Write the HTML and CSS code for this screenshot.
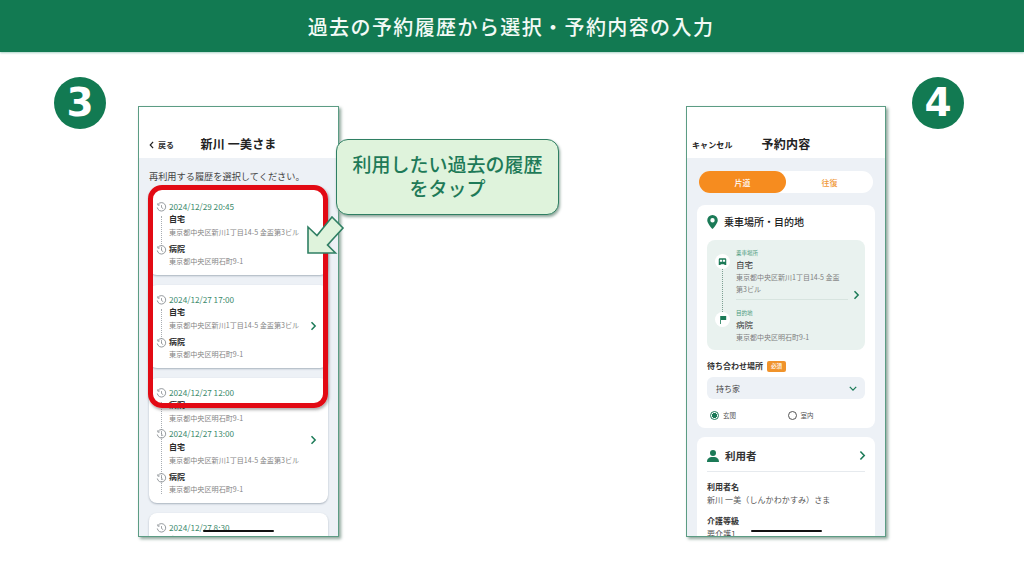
FILE: index.html
```html
<!DOCTYPE html>
<html lang="ja">
<head>
<meta charset="utf-8">
<title>過去の予約履歴から選択・予約内容の入力</title>
<link rel="stylesheet" href="styles.css">
</head>
<body>
<header class="topbar"><h1>過去の予約履歴から選択・予約内容の入力</h1></header>
<main class="canvas">
  <svg width="0" height="0" class="defs">
    <symbol id="hist" viewBox="0 0 12 12"><path d="M2.2 2.6A4.6 4.6 0 1 1 1.4 6" fill="none" stroke="#8a8f94" stroke-width="1"/><path d="M1.6 1.6l.5 2 2-.4" fill="none" stroke="#8a8f94" stroke-width=".9"/><path d="M6 3.4V6l1.9 1.3" fill="none" stroke="#8a8f94" stroke-width=".9"/></symbol>
    <symbol id="chev" viewBox="0 0 8 12"><path d="M1.6 1.4L6 6l-4.4 4.6" fill="none" stroke="#1b7a57" stroke-width="1.8"/></symbol>
  </svg>

  <div class="step step-3">3</div>
  <div class="step step-4">4</div>

  <section class="phone phone-3">
    <div class="nav nav-3">
      <span class="nav-side"><svg class="back" viewBox="0 0 6 10" width="5" height="8"><path d="M5 1L1.4 5 5 9" fill="none" stroke="#222" stroke-width="1.5"/></svg>戻る</span>
      <h2 class="nav-title">新川 一美さま</h2>
      <span></span>
    </div>
    <div class="body body-3">
      <p class="lead">再利用する履歴を選択してください。</p>
      <article class="card card-first">
        <div class="trail"></div>
        <div class="row date"><svg class="hist"><use href="#hist"/></svg>2024/12/29 20:45</div>
        <div class="row place">自宅</div>
        <div class="row addr">東京都中央区新川1丁目14-5 金盃第3ビル</div>
        <div class="row place stop"><svg class="hist"><use href="#hist"/></svg>病院</div>
        <div class="row addr">東京都中央区明石町9-1</div>
      </article>
      <article class="card">
        <div class="trail"></div>
        <svg class="chev"><use href="#chev"/></svg>
        <div class="row date"><svg class="hist"><use href="#hist"/></svg>2024/12/27 17:00</div>
        <div class="row place">自宅</div>
        <div class="row addr">東京都中央区新川1丁目14-5 金盃第3ビル</div>
        <div class="row place stop"><svg class="hist"><use href="#hist"/></svg>病院</div>
        <div class="row addr">東京都中央区明石町9-1</div>
      </article>
      <article class="card">
        <div class="trail trail-long"></div>
        <svg class="chev chev-low"><use href="#chev"/></svg>
        <div class="row date"><svg class="hist"><use href="#hist"/></svg>2024/12/27 12:00</div>
        <div class="row place">病院</div>
        <div class="row addr">東京都中央区明石町9-1</div>
        <div class="row date stop-date"><svg class="hist"><use href="#hist"/></svg>2024/12/27 13:00</div>
        <div class="row place place-gap">自宅</div>
        <div class="row addr">東京都中央区新川1丁目14-5 金盃第3ビル</div>
        <div class="row place stop"><svg class="hist"><use href="#hist"/></svg>病院</div>
        <div class="row addr">東京都中央区明石町9-1</div>
      </article>
      <article class="card">
        <div class="row date"><svg class="hist"><use href="#hist"/></svg>2024/12/27 8:30</div>
        <div class="row place">自宅</div>
      </article>
    </div>
    <div class="home"></div>
  </section>

  <div class="redframe"></div>
  <svg class="arrow" viewBox="0 0 40 40" width="40" height="40"><path d="M2 11V37H29.500L21.500 29 37 12 26 1 11 19.500Z" fill="#dff3dc" stroke="#2f7f63" stroke-width="1.6" stroke-linejoin="miter"/></svg>
  <div class="callout">利用したい過去の履歴<br>をタップ</div>

  <section class="phone phone-4">
    <div class="nav nav-4">
      <span class="nav-side cancel">キャンセル</span>
      <h2 class="nav-title">予約内容</h2>
      <span></span>
    </div>
    <div class="body body-4">
      <div class="toggle"><span class="seg seg-on">片道</span><span class="seg">往復</span></div>
      <div class="panel panel-route">
        <h3 class="sec-title"><svg viewBox="0 0 12 16" width="11" height="14"><path fill-rule="evenodd" fill="#1b7a57" d="M6 0a6 6 0 0 1 6 6c0 4-6 10-6 10S0 10 0 6a6 6 0 0 1 6-6Zm0 3.500a2.500 2.500 0 1 0 0 5 2.500 2.500 0 0 0 0-5Z"/></svg>乗車場所・目的地</h3>
        <div class="route">
          <div class="route-line"></div>
          <div class="route-dot dot-from"><svg viewBox="0 0 12 10" width="9" height="8"><path fill="#1b7a57" fill-rule="evenodd" d="M2.500 0h7A1.500 1.500 0 0 1 11 1.500V9H8.500V8h-5v1H1V1.500A1.500 1.500 0 0 1 2.500 0ZM2.500 2v2.500h3V2Zm4 0v2.500h3V2Z"/></svg></div>
          <div class="route-dot dot-to"><svg viewBox="0 0 10 10" width="8" height="8"><path fill="#1b7a57" d="M1.500 0H9v5H2.500v5h-1Z"/></svg></div>
          <svg class="chev chev-route"><use href="#chev"/></svg>
          <div class="route-block block-from">
            <div class="micro">乗車場所</div>
            <div class="route-name">自宅</div>
            <div class="route-addr">東京都中央区新川1丁目14-5 金盃<br>第3ビル</div>
          </div>
          <div class="route-block">
            <div class="micro">目的地</div>
            <div class="route-name">病院</div>
            <div class="route-addr">東京都中央区明石町9-1</div>
          </div>
        </div>
        <div class="wait"><span>待ち合わせ場所</span><em class="req">必須</em></div>
        <div class="select"><span>持ち家</span><svg viewBox="0 0 10 6" width="8" height="5"><path d="M1 1l4 4 4-4" fill="none" stroke="#1b7a57" stroke-width="1.6"/></svg></div>
        <div class="radios">
          <span class="radio radio-on"><i></i>玄関</span>
          <span class="radio"><i></i>室内</span>
        </div>
      </div>
      <div class="panel panel-user">
        <h3 class="sec-title user-title"><svg viewBox="0 0 12 12" width="12" height="12"><path fill="#1b7a57" d="M6 0a3 3 0 1 1 0 6 3 3 0 0 1 0-6ZM0 12c0-3 1.500-5 6-5s6 2 6 5Z"/></svg><span>利用者</span><svg class="chev chev-user"><use href="#chev"/></svg></h3>
        <div class="field-label">利用者名</div>
        <div class="field-value">新川 一美（しんかわかすみ）さま</div>
        <div class="field-label second">介護等級</div>
        <div class="field-value">要介護1</div>
      </div>
    </div>
    <div class="home"></div>
  </section>
</main>
</body>
</html>
```
FILE: styles.css
```css
* { box-sizing: border-box; margin: 0; padding: 0; }
html, body { width: 1024px; height: 576px; overflow: hidden; background: #fff; }
body { font-family: "Noto Sans CJK JP", "Noto Sans", sans-serif; color: #222; }

.topbar { height: 52px; background: #127a52; display: flex; align-items: center; justify-content: center; box-shadow: 0 1px 2px #a9d2c6; padding-right: 2px; }
.topbar h1 { font-size: 20px; font-weight: 500; letter-spacing: 1.4px; color: #f3faf6; }

.canvas { position: relative; width: 1024px; height: 524px; }
.defs { position: absolute; }

.step { position: absolute; top: 25px; width: 52px; height: 52px; border-radius: 50%; background: #127a52; color: #fff; font: 700 39px/52px "DejaVu Sans", sans-serif; text-align: center; }
.step-3 { left: 54px; }
.step-4 { left: 912px; }

.phone { position: absolute; top: 54px; height: 431px; background: #edf1f6; border: 1px solid #5c9c84; box-shadow: 2px 2px 3px #8fa79c; overflow: hidden; }
.phone-3 { left: 138px; width: 201px; }
.phone-4 { left: 686px; width: 200px; }

.nav { height: 51px; background: #fff; display: grid; grid-template-columns: 1fr auto 1fr; align-items: end; padding: 0 0 5px; }
.nav-side { font-size: 8px; font-weight: 700; line-height: 12px; padding-bottom: 2px; }
.nav-3 .nav-side { padding-left: 10px; display: flex; align-items: center; gap: 4px; color: #333; }
.nav-title { font-size: 12px; font-weight: 700; line-height: 18px; letter-spacing: .2px; }
.cancel { padding-left: 5px; font-size: 8px; letter-spacing: .1px; }

.body-3 { padding: 0 10px; }
.lead { font-size: 9.200px; line-height: 14px; color: #444; margin-top: 11px; margin-bottom: 5px; white-space: nowrap; }
.card { position: relative; background: #fff; border-radius: 8px; padding: 8px 0 8px 20px; margin-bottom: 10px; box-shadow: 0 1px 2px #a9b2bd; }
.card-first { padding-top: 12px; }
.row { position: relative; height: 12px; line-height: 12px; white-space: nowrap; }
.date { font-size: 8.200px; color: #3c8a6c; }
.place { font-size: 8px; font-weight: 700; margin-top: 1px; color: #2a2a2a; }
.addr { font-size: 7.100px; color: #858585; margin-top: 1px; }
.stop { margin-top: 5px; }
.stop + .addr { margin-top: 0; }
.stop-date { margin-top: 3px; }
.place-gap { margin-top: 2px; }
.hist { position: absolute; left: -13px; top: 2px; width: 11px; height: 11px; }
.trail { position: absolute; left: 12px; top: 24px; height: 34px; border-left: 1px dotted #a8adb2; }
.card-first .trail { top: 28px; }
.trail-long { height: 92px; }
.chev { position: absolute; width: 7px; height: 10px; right: 11px; top: 36px; }
.chev-low { top: 57px; }

.home { position: absolute; left: 64px; bottom: 4px; width: 71px; height: 2px; background: #111; border-radius: 1px; }

.redframe { position: absolute; left: 148px; top: 133px; width: 180px; height: 223px; border: 5px solid #e20a14; border-radius: 14px; box-shadow: 1px 2px 3px rgba(70,70,70,.45); }
.arrow { position: absolute; left: 306px; top: 164px; }
.callout { position: absolute; left: 336px; top: 87px; width: 223px; height: 76px; background: #dff3dc; border: 1.500px solid #2f7f63; border-radius: 12px; box-shadow: 1px 2px 3px #8fa79c; color: #1e7a58; font-size: 19px; font-weight: 500; line-height: 24px; text-align: center; display: flex; align-items: center; justify-content: center; padding-bottom: 2px; }

.body-4 { padding: 13px 10px 0; }
.toggle { display: flex; height: 22px; margin: 0 2px; background: #fff; border-radius: 11px; font-size: 8px; font-weight: 500; color: #f0993a; }
.seg { flex: 1; display: flex; align-items: center; justify-content: center; border-radius: 11px; }
.seg-on { background: #f68c1f; color: #fff; }
.panel { background: #fff; border-radius: 8px; margin-top: 12px; padding: 0 10px; }
.panel-route { height: 223px; padding-top: 8px; }
.sec-title { display: flex; align-items: center; gap: 6px; font-size: 10px; font-weight: 500; line-height: 18px; }
.route { position: relative; background: #e9f2ef; border-radius: 8px; margin-top: 9px; height: 110px; padding: 9px 0 0 29px; }
.route-line { position: absolute; left: 15px; top: 28px; height: 44px; border-left: 1px dotted #7d9f92; }
.route-dot { position: absolute; left: 8px; width: 15px; height: 15px; border-radius: 50%; background: #fff; display: flex; align-items: center; justify-content: center; }
.dot-from { top: 14px; }
.dot-to { top: 72px; }
.chev-route { right: 5px; top: 50px; }
.route-block { width: 112px; }
.block-from { height: 51px; border-bottom: 1px solid #d7e4df; margin-bottom: 9px; }
.micro { font-size: 5.500px; line-height: 8px; color: #4a9a7c; }
.route-name { font-size: 8.500px; line-height: 13px; margin-top: 1px; color: #333; }
.route-addr { font-size: 7px; line-height: 12px; color: #808080; white-space: nowrap; }
.wait { display: flex; align-items: center; gap: 4px; margin-top: 9px; font-size: 8px; font-weight: 700; line-height: 14px; color: #333; }
.req { font-style: normal; font-size: 5.500px; font-weight: 500; color: #fff; background: #f0932b; border-radius: 2px; padding: 0 4px; line-height: 11px; }
.select { display: flex; align-items: center; justify-content: space-between; height: 22px; margin-top: 4px; padding: 0 8px 0 9px; background: #edf1f6; border-radius: 6px; font-size: 8px; color: #444; }
.radios { display: flex; height: 12px; margin-top: 10px; padding-left: 3px; font-size: 6.500px; line-height: 12px; color: #555; }
.radio { width: 79px; display: flex; align-items: center; gap: 4px; }
.radio i { width: 9px; height: 9px; border-radius: 50%; border: 1px solid #555; }
.radio-on i { border-color: #1b7a57; background: radial-gradient(circle, #1b7a57 0 2.300px, #fff 2.800px); }
.panel-user { margin-top: 9px; height: 120px; padding-top: 10px; }
.user-title { position: relative; font-size: 10.500px; font-weight: 700; height: 25px; border-bottom: 1px solid #e6eaee; gap: 6px; padding-bottom: 7px; color: #333; }
.chev-user { right: -1px; top: 3px; height: 11px; }
.field-label { font-size: 8px; font-weight: 700; line-height: 12px; margin-top: 9px; color: #333; }
.second { margin-top: 9px; }
.field-value { font-size: 8px; line-height: 12px; margin-top: 1px; color: #555; letter-spacing: .1px; white-space: nowrap; }
```
